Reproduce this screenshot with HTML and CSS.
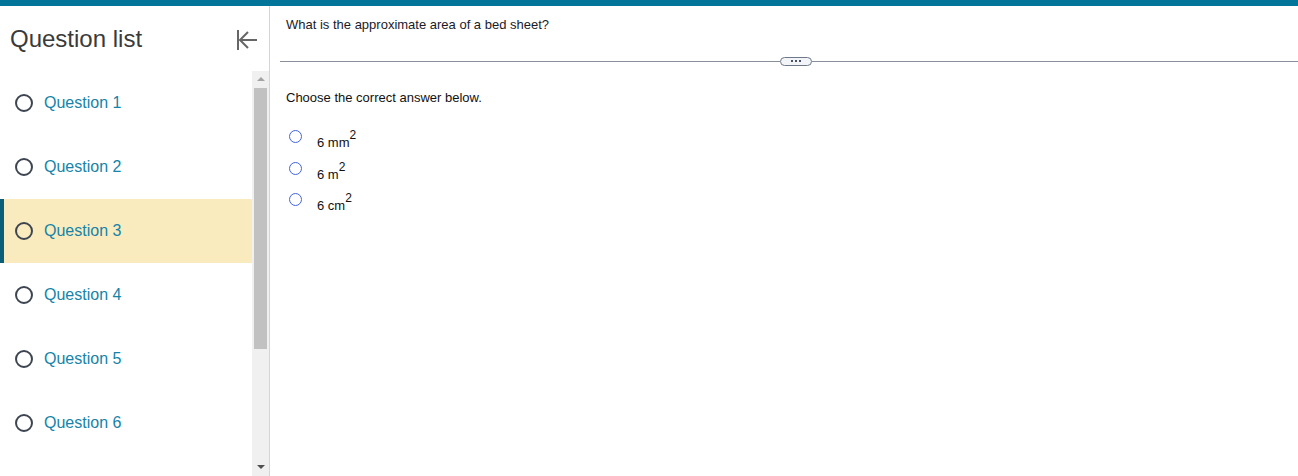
FILE: index.html
```html
<!DOCTYPE html>
<html>
<head>
<meta charset="utf-8">
<link rel="stylesheet" href="styles.css">
</head>
<body>
<div class="topbar"></div>
<div class="layout">
  <aside class="sidebar">
    <div class="side-head">
      <h1 class="side-title">Question list</h1>
      <button class="collapse" aria-label="Collapse">
        <svg width="24" height="22" viewBox="0 0 24 22"><path d="M3 1v20M22 11H6M13 3l-8 8 8 8" fill="none" stroke="#666" stroke-width="2"/></svg>
      </button>
    </div>
    <div class="side-body">
      <ul class="qlist">
        <li class="qitem"><span class="qcircle"></span><span class="qlabel">Question 1</span></li>
        <li class="qitem"><span class="qcircle"></span><span class="qlabel">Question 2</span></li>
        <li class="qitem active"><span class="qcircle"></span><span class="qlabel">Question 3</span></li>
        <li class="qitem"><span class="qcircle"></span><span class="qlabel">Question 4</span></li>
        <li class="qitem"><span class="qcircle"></span><span class="qlabel">Question 5</span></li>
        <li class="qitem"><span class="qcircle"></span><span class="qlabel">Question 6</span></li>
      </ul>
      <div class="scrollbar">
        <span class="arrow up"></span>
        <span class="thumb"></span>
        <span class="arrow down"></span>
      </div>
    </div>
  </aside>
  <main class="main">
    <p class="question">What is the approximate area of a bed sheet?</p>
    <div class="divider">
      <span class="line left"></span>
      <span class="pill"><i></i><i></i><i></i></span>
      <span class="line right"></span>
    </div>
    <p class="instr">Choose the correct answer below.</p>
    <ul class="options">
      <li class="opt"><span class="radio"></span><span class="olabel">6 mm<sup>2</sup></span></li>
      <li class="opt"><span class="radio"></span><span class="olabel">6 m<sup>2</sup></span></li>
      <li class="opt"><span class="radio"></span><span class="olabel">6 cm<sup>2</sup></span></li>
    </ul>
  </main>
</div>
</body>
</html>
```
FILE: styles.css
```css
* { box-sizing: border-box; }
html, body { margin: 0; padding: 0; }
body {
  font-family: "Liberation Sans", Arial, sans-serif;
  background: #fff;
  width: 1298px;
  height: 476px;
  overflow: hidden;
}
.topbar { height: 6px; background: #04759a; }
.layout { display: flex; height: 470px; }
.sidebar {
  width: 270px;
  flex: 0 0 270px;
  border-right: 1px solid #d4d4e0;
  display: flex;
  flex-direction: column;
}
.side-head {
  height: 65px;
  display: flex;
  align-items: center;
  justify-content: space-between;
  padding: 0 10px 0 10px;
}
.side-title {
  margin: 0;
  font-size: 24px;
  font-weight: normal;
  color: #3a3a3a;
}
.collapse {
  border: 0;
  background: none;
  padding: 0;
  display: flex;
  position: relative;
  top: 1px;
}
.side-body { flex: 1; display: flex; }
.qlist { list-style: none; margin: 0; padding: 0; width: 252px; }
.qitem {
  height: 64px;
  display: flex;
  align-items: center;
  padding-left: 15px;
}
.qitem.active {
  background: #f9ebbe;
  border-left: 4px solid #0b5f78;
  padding-left: 11px;
}
.qcircle {
  width: 18px;
  height: 18px;
  border: 2px solid #3d4650;
  border-radius: 50%;
  flex: 0 0 18px;
}
.qlabel {
  margin-left: 11px;
  font-size: 16px;
  color: #1683a8;
}
.scrollbar {
  width: 17px;
  background: #f0f0f0;
  display: flex;
  flex-direction: column;
  align-items: center;
  padding: 0 2px;
}
.arrow { width: 0; height: 0; border-left: 4px solid transparent; border-right: 4px solid transparent; }
.arrow.up { border-bottom: 4px solid #a3a3a3; margin-top: 6px; }
.arrow.down { border-top: 4px solid #505050; margin-top: auto; margin-bottom: 7px; }
.thumb { width: 13px; height: 261px; background: #c1c1c1; margin-top: 7px; }
.main { flex: 1; padding-top: 10px; }
.question {
  margin: 0 0 0 16px;
  font-size: 13px;
  color: #1a1a2a;
  line-height: 17px;
}
.divider {
  display: flex;
  align-items: center;
  margin: 23px 0 0 10px;
  height: 10px;
}
.line { height: 1px; background: #8a909b; }
.line.left { width: 500px; }
.line.right { flex: 1; }
.pill {
  width: 32px;
  height: 9px;
  border: 1px solid #6d7888;
  border-radius: 5px;
  background: #f3f4f7;
  display: flex;
  align-items: center;
  justify-content: center;
  gap: 2px;
}
.pill i { width: 2px; height: 2px; background: #4a5362; display: block; }
.instr {
  margin: 23px 0 0 16px;
  font-size: 13px;
  line-height: 17px;
  color: #111;
}
.options { list-style: none; margin: 24px 0 0 0; padding: 0 0 0 19px; }
.opt { display: flex; align-items: flex-start; height: 31.5px; }
.radio {
  width: 13px;
  height: 13px;
  border: 1.5px solid #4466dd;
  border-radius: 50%;
  flex: 0 0 13px;
}
.olabel {
  margin-left: 15px;
  margin-top: 5px;
  font-size: 13px;
  color: #111;
  line-height: 15px;
}
.olabel sup { font-size: 12px; vertical-align: 8px; line-height: 0; }
```
